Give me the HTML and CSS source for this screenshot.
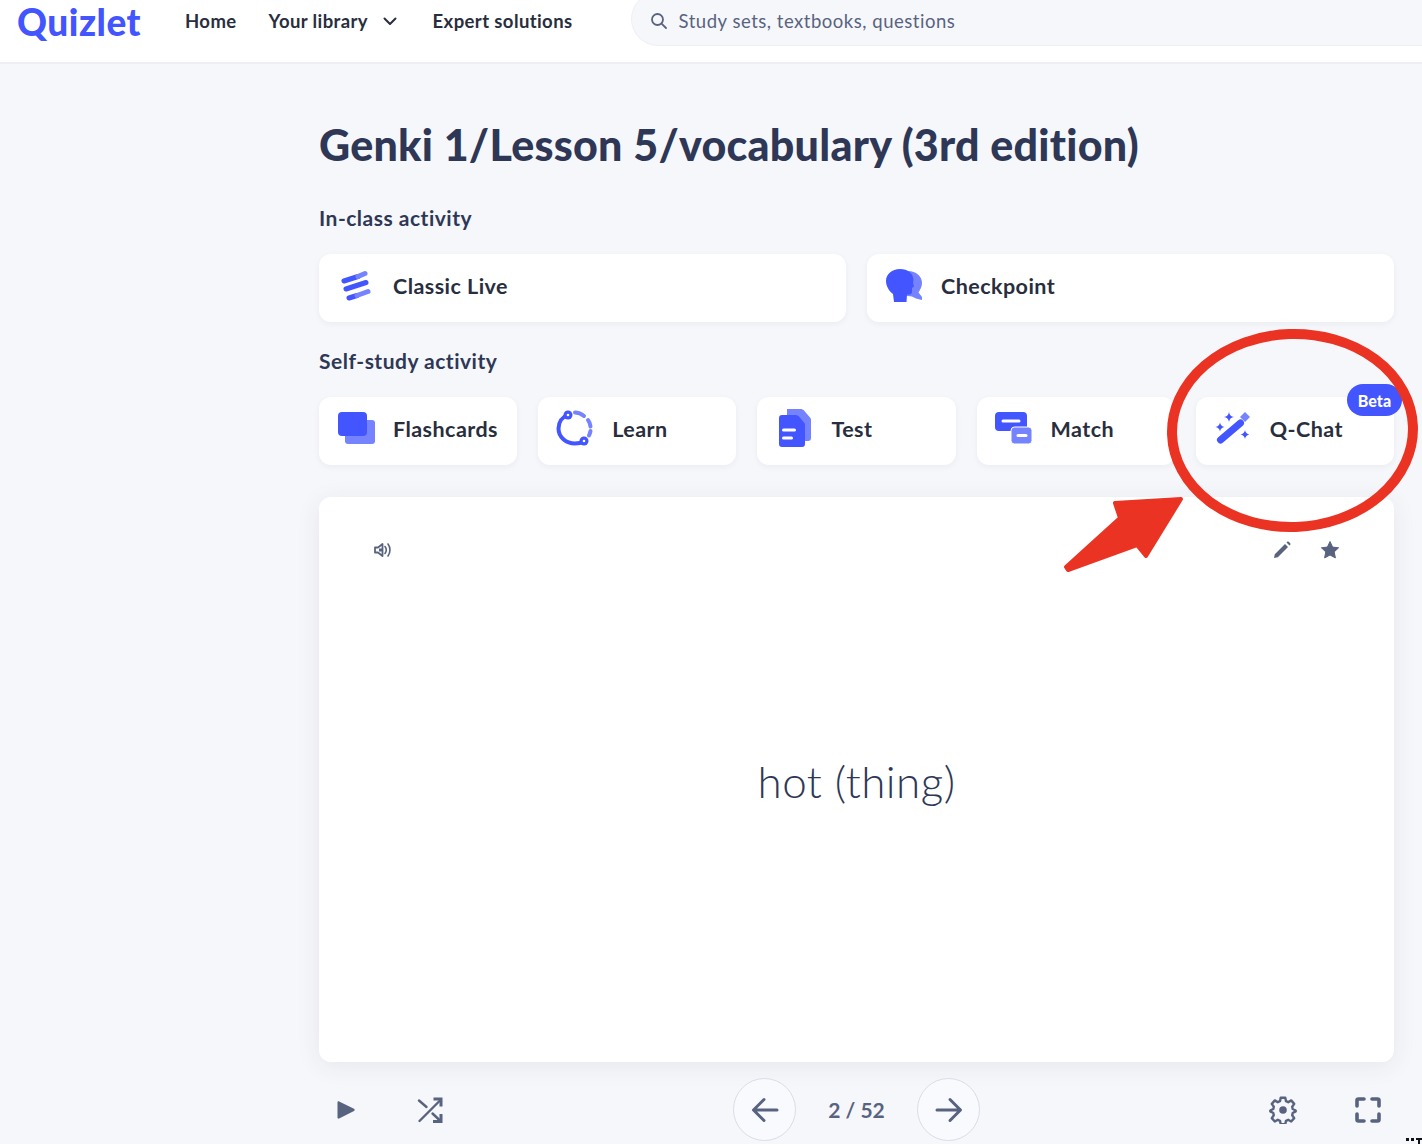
FILE: index.html
```html
<!DOCTYPE html>
<html lang="en">
<head>
<meta charset="utf-8">
<title>Genki 1/Lesson 5/vocabulary (3rd edition)</title>
<link rel="stylesheet" href="styles.css">
</head>
<body>
<header class="topbar">
  <a class="logo">Quizlet</a>
  <nav class="nav">
    <a class="nav-item">Home</a>
    <a class="nav-item nav-lib">Your library
      <svg class="chev" width="14" height="9" viewBox="0 0 14 9"><path d="M1.5 1.5 7 7l5.500-5.500" fill="none" stroke="#282e3e" stroke-width="2" stroke-linecap="round" stroke-linejoin="round"/></svg>
    </a>
    <a class="nav-item">Expert solutions</a>
  </nav>
  <div class="search">
    <svg width="18" height="18" viewBox="0 0 18 18"><circle cx="7.500" cy="7.500" r="5.500" fill="none" stroke="#586380" stroke-width="1.800"/><path d="m11.800 11.800 4.200 4.200" stroke="#586380" stroke-width="1.800" stroke-linecap="round"/></svg>
    <span>Study sets, textbooks, questions</span>
  </div>
</header>

<main class="main">
  <h1 class="title">Genki 1/Lesson 5/vocabulary (3rd edition)</h1>

  <h2 class="label">In-class activity</h2>
  <div class="row row-two">
    <a class="tile">
      <svg class="icon" viewBox="0 0 36 36">
        <g fill="none" stroke-width="5" stroke-linecap="round">
          <path d="m6 13 14-4.500" stroke="#4255ff"/><path d="m20 8.500 7-3" stroke="#7583ff"/>
          <path d="m8 21 20-6.500" stroke="#4255ff"/>
          <path d="m11 30 8-2.500" stroke="#4255ff"/><path d="m19 27.500 11-4" stroke="#7583ff"/>
        </g>
      </svg>
      <span>Classic Live</span>
    </a>
    <a class="tile">
      <svg class="icon" viewBox="0 0 36 36">
        <path d="M22 3c8 0 14 5 14 12 0 4-2 7-3.500 9.500l3.500 4.500v3l-6-1.500-4-2-8-1z" fill="#7583ff"/>
        <path d="M14 1c8 0 13 4 13.500 11l-.5 3 1 3.500-2 1.500v4c0 1.500-1 2.500-2.500 2.500H21l-.5 7.500H8l-1-8C3 23 0 18 0 13 0 6 6 1 14 1z" fill="#4255ff"/>
      </svg>
      <span>Checkpoint</span>
    </a>
  </div>

  <h2 class="label label-second">Self-study activity</h2>
  <div class="row row-five">
    <a class="tile">
      <svg class="icon" viewBox="0 0 36 36">
        <rect x="7" y="9" width="30" height="24" rx="3" fill="#7583ff"/>
        <rect x="0" y="1" width="29" height="24" rx="4" fill="#4255ff"/>
      </svg>
      <span>Flashcards</span>
    </a>
    <a class="tile">
      <svg class="icon" viewBox="0 0 36 36">
        <path d="M11 3.500C5 6 1.500 11.500 1.500 17.500 1.500 26 9 32.500 18 32.500c3 0 6-.5 9-2.500" fill="none" stroke="#4255ff" stroke-width="4"/>
        <path d="M18 1.500c3 0 6 1 9 3.500M31 9c1.500 2 2.300 4 2.500 6.500M33.500 20c-.3 1.500-.8 3-1.500 4.500" fill="none" stroke="#7583ff" stroke-width="4" stroke-linecap="round"/>
        <circle cx="11" cy="4" r="4.500" fill="#4255ff"/><circle cx="11" cy="4" r="1.300" fill="#fff"/>
        <circle cx="27" cy="30" r="4.500" fill="#4255ff"/><circle cx="27" cy="30" r="1.300" fill="#fff"/>
      </svg>
      <span>Learn</span>
    </a>
    <a class="tile">
      <svg class="icon" viewBox="0 0 36 36">
        <path d="M11-2h13c2 0 3 .5 4 1.500l6 7c1 1 1 2 1 3.500v17c0 2-1 3-3 3H11z" fill="#7583ff"/>
        <path d="M6 4h13c2 0 3 .5 4 1.500l5 6c1 1 1 2 1 3.500v18c0 2-1 3-3 3H6c-2 0-3-1-3-3V7c0-2 1-3 3-3z" fill="#4255ff"/>
        <path d="M7.500 19h11M7.500 27h8" stroke="#fff" stroke-width="3" stroke-linecap="round"/>
      </svg>
      <span>Test</span>
    </a>
    <a class="tile">
      <svg class="icon" viewBox="0 0 36 36">
        <rect x="-1" y="1" width="32" height="19" rx="4" fill="#4255ff"/>
        <path d="M7 10h16" stroke="#fff" stroke-width="3" stroke-linecap="round"/>
        <rect x="15" y="16" width="21" height="17" rx="3.500" fill="#7583ff" stroke="#fff" stroke-width="1"/>
        <path d="M22 24.500h8" stroke="#fff" stroke-width="3" stroke-linecap="round"/>
      </svg>
      <span>Match</span>
    </a>
    <a class="tile tile-beta">
      <svg class="icon" viewBox="0 0 36 36">
        <path d="m5.500 29 20-17" stroke="#4255ff" stroke-width="7" stroke-linecap="round" fill="none"/>
        <path d="m30 1 5 5-5 5-5-5z" fill="#7583ff"/>
        <path d="M14 1c.5 3 2 4.500 5 5-3 .5-4.500 2-5 5-.5-3-2-4.500-5-5 3-.5 4.500-2 5-5zM5 11.500c.4 2.500 2 4 4.500 4.500C7 16.400 5.400 18 5 20.500 4.600 18 3 16.400.5 16 3 15.500 4.600 14 5 11.500zM30 19c.4 2.500 2 4 4.500 4.500-2.500.4-4.100 2-4.500 4.500-.4-2.500-2-4.100-4.500-4.500 2.500-.5 4.100-2 4.500-4.500z" fill="#4255ff"/>
      </svg>
      <span>Q-Chat</span>
      <b class="badge">Beta</b>
    </a>
  </div>

  <section class="flashcard">
    <div class="card-top">
      <svg width="18" height="18" viewBox="0 0 18 18"><path d="M1 6.500h3L8.500 3v12L4 11.500H1z" fill="none" stroke="#586380" stroke-width="1.800" stroke-linejoin="round"/><path d="M5 7.500h3v3H5z" fill="#586380"/><path d="M11 5.500c1.500 2 1.500 5 0 7M14 3c2.600 3.500 2.600 8.500 0 12" fill="none" stroke="#586380" stroke-width="1.600" stroke-linecap="round"/></svg>
      <div class="card-tools">
        <svg width="20" height="20" viewBox="0 0 20 20"><path d="M2 18l.8-3.800L13 4l3 3L5.800 17.200zM14.500 2.500l.7-.7c.5-.5 1-.5 1.500 0l1.500 1.500c.5.500.5 1 0 1.500l-.7.700z" fill="#586380"/></svg>
        <svg width="20" height="20" viewBox="0 0 20 20"><path d="m10 1.500 2.600 5.600 6 .7-4.400 4.100 1.200 6L10 15l-5.400 2.900 1.200-6L1.400 7.800l6-.7z" fill="#586380" stroke="#586380" stroke-linejoin="round"/></svg>
      </div>
    </div>
    <div class="card-face">hot (thing)</div>
  </section>

  <div class="controls">
    <div class="ctl-group">
      <svg class="ctl" viewBox="0 0 28 28"><path d="M6.500 6.500c0-1 .8-1.400 1.600-1L23 12.800c.9.500.9 1.600 0 2.100L8.100 22.500c-.8.400-1.600 0-1.600-1z" fill="#586380"/></svg>
      <svg class="ctl" viewBox="0 0 28 28"><g fill="none" stroke="#586380" stroke-width="2.400"><path d="M3.500 25 24 4.500M3 4.500l7.500 6.500M16.500 17.500l8 7.500" stroke-linecap="round"/><path d="M17.500 3H25v7.500M25 18v7.500h-8" stroke-width="3"/></g></svg>
    </div>
    <div class="pager">
      <button class="round" type="button"><svg width="30" height="30" viewBox="0 0 30 30"><path d="M27 15H4M14 4.500 3.500 15 14 25.500" fill="none" stroke="#586380" stroke-width="3" stroke-linecap="round" stroke-linejoin="round"/></svg></button>
      <span class="count">2 / 52</span>
      <button class="round" type="button"><svg width="30" height="30" viewBox="0 0 30 30"><path d="M3 15h23M16 4.500 26.500 15 16 25.500" fill="none" stroke="#586380" stroke-width="3" stroke-linecap="round" stroke-linejoin="round"/></svg></button>
    </div>
    <div class="ctl-group ctl-right">
      <svg class="ctl" viewBox="0 0 28 28"><path d="M11.700 1.800h4.600l.7 3.400 2.200 1 3-1.800 3 3.500-2 2.800.5 2.300 3 1.500v.9l-3 1.600-.5 2.300 2 2.800-3 3.400-3-1.700-2.200 1-.7 3.300h-4.600l-.7-3.300-2.200-1-3 1.700-3-3.400 2-2.800-.5-2.300-3-1.600v-.9l3-1.500.5-2.300-2-2.800 3-3.500 3 1.800 2.200-1z" fill="none" stroke="#586380" stroke-width="2.400" stroke-linejoin="round"/><circle cx="14" cy="14" r="3.800" fill="#586380"/></svg>
      <svg class="ctl" viewBox="0 0 28 28"><path d="M3 10V4.500C3 3.500 3.500 3 4.500 3H10M18 3h5.500c1 0 1.500.5 1.500 1.500V10M25 18v5.500c0 1-.5 1.500-1.500 1.500H18M10 25H4.500C3.500 25 3 24.500 3 23.500V18" fill="none" stroke="#586380" stroke-width="3.600" stroke-linecap="round"/></svg>
    </div>
  </div>
</main>

<svg class="annotation" width="1422" height="1144" viewBox="0 0 1422 1144">
  <ellipse cx="1292.500" cy="430.500" rx="120.500" ry="96.500" fill="none" stroke="#ea3323" stroke-width="10" transform="rotate(-2 1292.500 430.500)"/>
  <path d="M1115 503 1181 499 1146 556 1137 545 1068 570 1066 567 1120 518z" fill="#ea3323" stroke="#ea3323" stroke-width="4" stroke-linejoin="round"/>
  <path d="M1406 1138h3v3h-3zM1411 1138h3v3h-3zM1416 1138h6v2h-2v4h-2v-4h-2z" fill="#111"/>
</svg>
</body>
</html>
```
FILE: styles.css
```css
* { box-sizing: border-box; }
html, body { margin: 0; padding: 0; height: 100%; }
body {
  width: 1422px;
  height: 1144px;
  overflow: hidden;
  background: #f6f7fb;
  color: #282e3e;
  font-family: "Lato", "Noto Sans", sans-serif;
  position: relative;
}
a { color: inherit; text-decoration: none; }

.topbar {
  height: 64px;
  background: #fff;
  border-bottom: 2px solid #edeff4;
  display: flex;
  align-items: flex-start;
  padding-left: 17px;
  overflow: hidden;
}
.logo {
  width: 168px;
  font-size: 37px;
  line-height: 44px;
  font-weight: 900;
  color: #4255ff;
  letter-spacing: 0.5px;
}
.nav {
  display: flex;
  align-items: center;
  height: 42px;
  font-size: 18.500px;
  font-weight: 700;
  letter-spacing: 0.4px;
}
.nav-item { display: flex; align-items: center; white-space: nowrap; }
.nav-item + .nav-item { margin-left: 32px; }
.nav-lib { width: 132px; }
.chev { margin-left: 15px; }
.search {
  margin-left: 58px;
  margin-top: -8px;
  flex: 1;
  height: 54px;
  background: #f6f7fb;
  border: 1px solid #edeff4;
  border-right: 0;
  border-radius: 27px 0 0 27px;
  display: flex;
  align-items: center;
  padding: 4px 0 0 18px;
  gap: 11px;
  color: #586380;
  font-size: 18.500px;
  letter-spacing: 0.52px;
}

.main { padding: 56px 28px 0 319px; }
.title {
  margin: 0;
  font-size: 43px;
  line-height: 50px;
  font-weight: 900;
  color: #2e3856;
  white-space: nowrap;
  letter-spacing: 0.25px;
}
.label {
  margin: 36px 0 24px;
  font-size: 21px;
  line-height: 24px;
  font-weight: 700;
  color: #2e3856;
  letter-spacing: 0.5px;
}
.label-second { margin-top: 27px; }
.row { display: grid; gap: 21px; }
.row-two { grid-template-columns: repeat(2, 1fr); }
.row-five { grid-template-columns: repeat(5, 1fr); }

.tile {
  position: relative;
  height: 68px;
  background: #fff;
  border-radius: 12px;
  box-shadow: 0 2px 6px rgba(40, 46, 62, 0.05);
  display: flex;
  align-items: center;
  gap: 19px;
  padding-left: 19px;
  font-size: 21.500px;
  font-weight: 700;
  color: #282e3e;
  letter-spacing: 0.45px;
}
.tile span { padding-bottom: 4px; }
.icon { width: 36px; height: 36px; flex: none; margin-top: -4px; overflow: visible; }
.badge {
  position: absolute;
  top: -13px;
  right: -8px;
  width: 55px;
  height: 32px;
  border-radius: 16px;
  background: #4255ff;
  color: #fff;
  font-size: 16px;
  line-height: 33px;
  text-align: center;
  letter-spacing: 0;
}

.flashcard {
  margin-top: 32px;
  height: 565px;
  background: #fff;
  border-radius: 12px;
  box-shadow: 0 4px 24px rgba(40, 46, 62, 0.08);
  display: flex;
  flex-direction: column;
}
.card-top {
  display: flex;
  justify-content: space-between;
  align-items: center;
  padding: 43px 54px 0 55px;
  height: 63px;
}
.card-tools { display: flex; gap: 28px; }
.card-face {
  flex: 1;
  padding-bottom: 60px;
  display: flex;
  align-items: center;
  justify-content: center;
  font-size: 44px;
  font-weight: 300;
  color: #2e3856;
  letter-spacing: 0.45px;
}

.controls {
  margin-top: 16px;
  display: grid;
  grid-template-columns: 1fr auto 1fr;
  align-items: center;
}
.ctl-group { display: flex; gap: 57px; padding-left: 12px; align-items: center; }
.ctl-right { justify-content: flex-end; padding: 0 12px 0 0; }
.ctl { width: 28px; height: 28px; }
.pager { display: flex; align-items: center; }
.round {
  width: 63px;
  height: 63px;
  padding: 0;
  border-radius: 50%;
  border: 1.500px solid #d9dde8;
  background: #f9fafd;
  display: flex;
  align-items: center;
  justify-content: center;
}
.count {
  width: 121px;
  text-align: center;
  font-size: 21px;
  font-weight: 700;
  color: #586380;
}

.annotation { position: absolute; left: 0; top: 0; pointer-events: none; }
```
